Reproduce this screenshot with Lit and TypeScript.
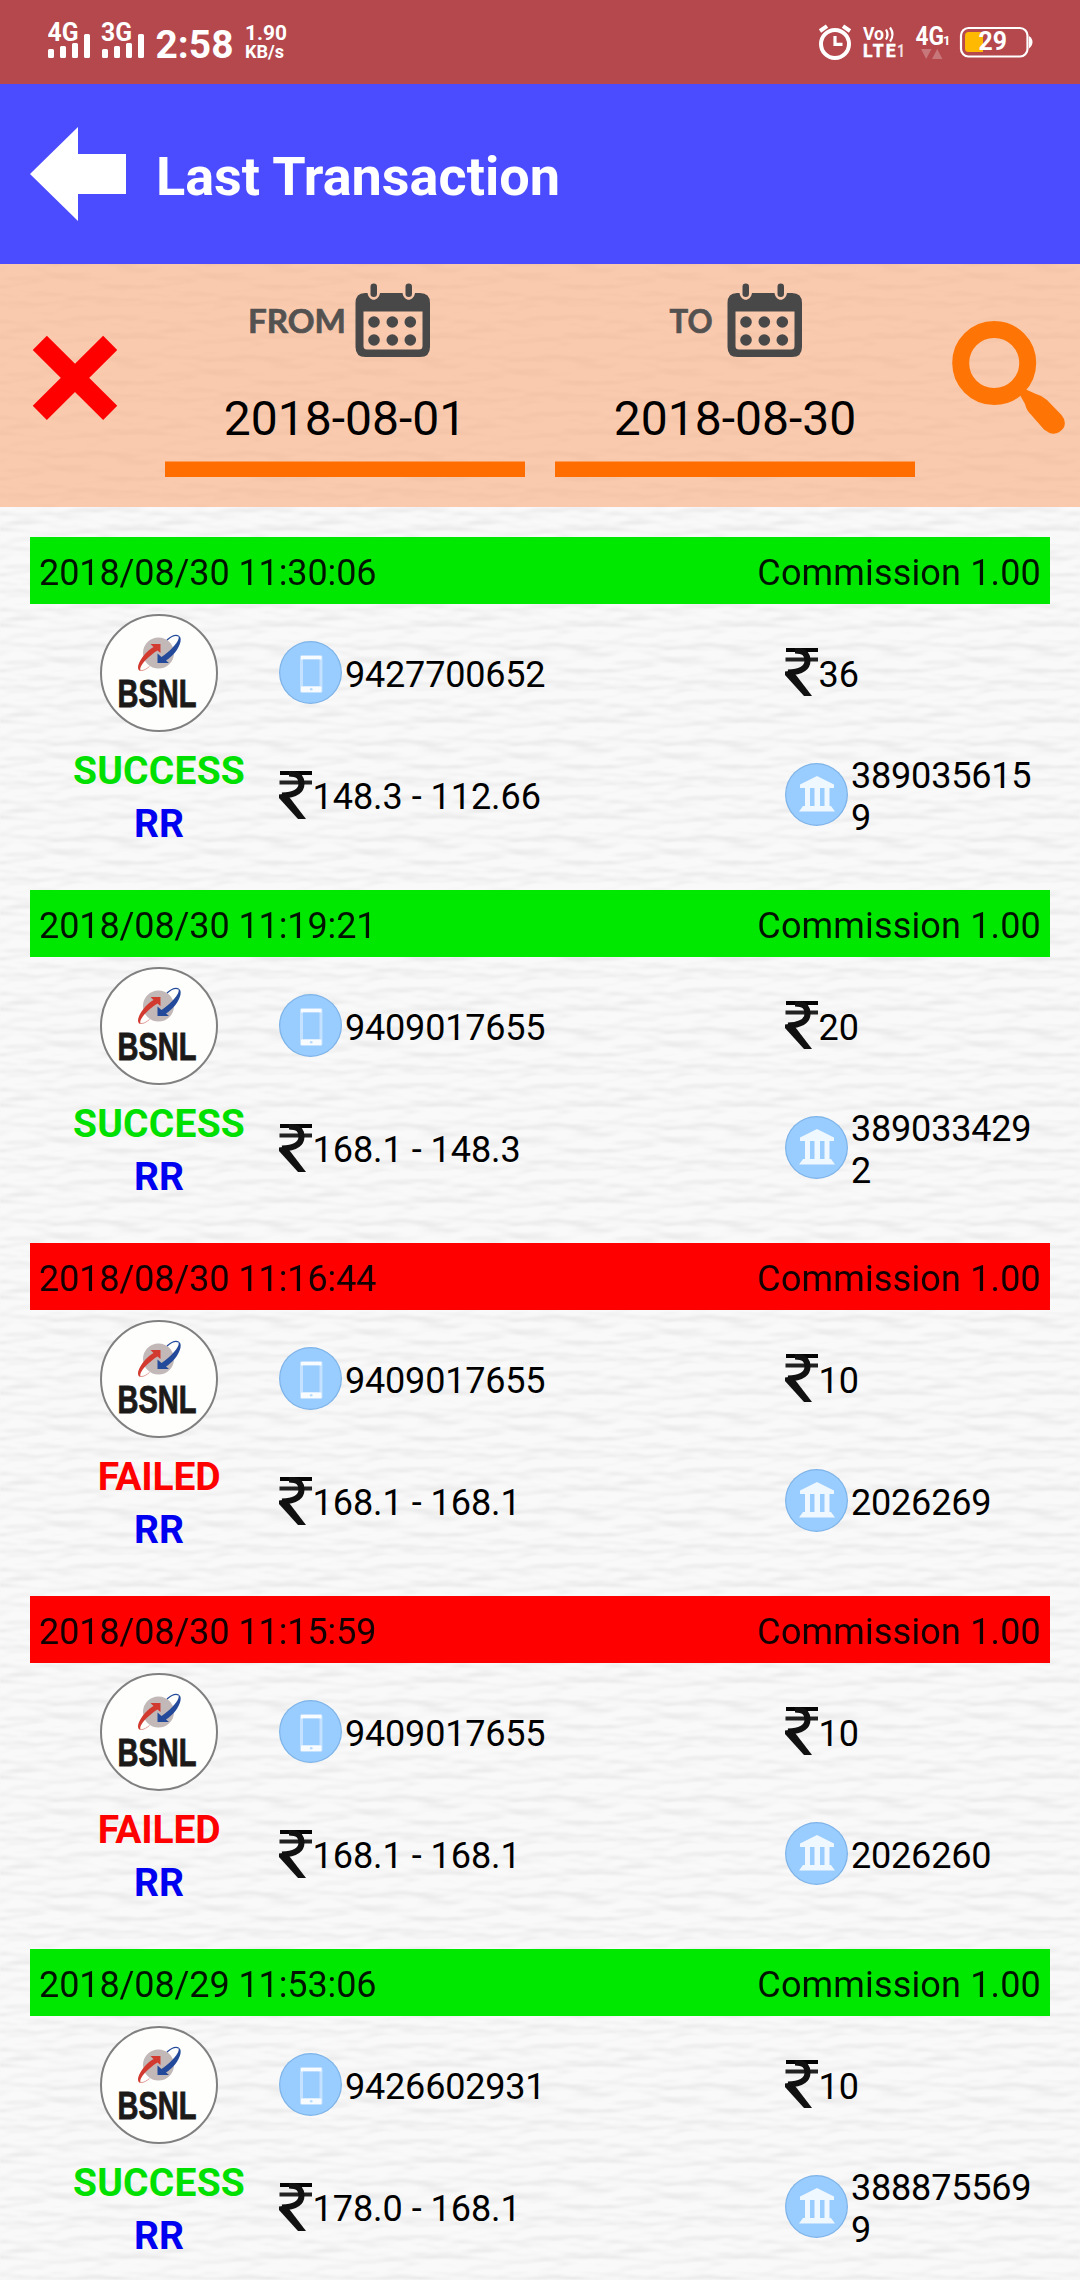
import { LitElement, html, svg, css } from "lit";
import { customElement, property } from "lit/decorators.js";

interface Txn {
  time: string;
  ok: boolean;
  phone: string;
  amount: string;
  balance: string;
  ref: string;
}

const TXNS: Txn[] = [
  { time: "2018/08/30 11:30:06", ok: true, phone: "9427700652", amount: "36", balance: "148.3 - 112.66", ref: "3890356159" },
  { time: "2018/08/30 11:19:21", ok: true, phone: "9409017655", amount: "20", balance: "168.1 - 148.3", ref: "3890334292" },
  { time: "2018/08/30 11:16:44", ok: false, phone: "9409017655", amount: "10", balance: "168.1 - 168.1", ref: "2026269" },
  { time: "2018/08/30 11:15:59", ok: false, phone: "9409017655", amount: "10", balance: "168.1 - 168.1", ref: "2026260" },
  { time: "2018/08/29 11:53:06", ok: true, phone: "9426602931", amount: "10", balance: "178.0 - 168.1", ref: "3888755699" },
];

const rupee = html`<svg class="rupee" width="33" height="48" viewBox="0 0 33 48">
  <path d="M1 2H33" fill="none" stroke="#050505" stroke-width="4" />
  <path d="M0.500 11.500H33" fill="none" stroke="#222" stroke-width="4" />
  <path d="M10 2.500C19 2.500 22.500 6 22.500 12.500C22.500 20.500 16 24 3 24.500" fill="none" stroke="#111" stroke-width="6" />
  <path d="M0 23.500L7.500 22.500L27 48H19L0 27Z" fill="#111" />
</svg>`;

const phone = html`<svg width="64" height="63" viewBox="0 0 64 63">
  <circle cx="31.500" cy="31.500" r="31.500" fill="#7db3e8" />
  <circle cx="31.500" cy="31.500" r="30.300" fill="#99ccff" />
  <rect x="21" y="14" width="22.500" height="38" rx="2" fill="#c4e1ff" />
  <path d="M22 15H42.500V18.500H22ZM22 45.500H42.500V51H22Z" fill="#f8fcff" />
  <rect x="24" y="18.500" width="16.500" height="26.500" fill="#99ccff" />
  <circle cx="32.200" cy="48.200" r="1.300" fill="#b5daff" />
</svg>`;

const bank = html`<svg width="64" height="63" viewBox="0 0 64 63">
  <circle cx="31.500" cy="31.500" r="31.500" fill="#7db3e8" />
  <circle cx="31.500" cy="31.500" r="30.300" fill="#99ccff" />
  <path d="M32 13L49 21.500V25H15V21.500ZM20 24.500h5v20h-5zM29.500 24.500h5.500v20h-5.500zM39.500 24.500h5v20h-5zM18 43H46L50 48.500H14Z" fill="#eff7ff" />
</svg>`;

const logo = html`<svg width="118" height="118" viewBox="0 0 118 118">
  <circle cx="59" cy="59" r="58" fill="#fefefd" stroke="#808080" stroke-width="2" />
  <circle cx="58.500" cy="39" r="15.500" fill="#c2b8b8" />
  <path d="M41 57C35.500 56.500 38 48 45 40C48 36.500 51 34.500 53.500 33L50.500 30H60.500V39L57.500 36.500C50 41 42 49 40.500 53.500C40 55 40.300 56.300 41 57Z" fill="#d23a30" />
  <path d="M77.500 21.500C83 22 81 31 75 38.500C72 42 69 44.500 66 46.500L69 49H57.500V39.500L61.500 43C69 38 77 30 78.500 25C79 23 78.500 22 77.500 21.500Z" fill="#234a9a" />
  <path d="M67 26C71 22.500 75.500 20.500 78.500 22" fill="none" stroke="#234a9a" stroke-width="1.300" />
  <path d="M41 56.500C43.500 57 47 54.500 49.500 52.500" fill="none" stroke="#d8857d" stroke-width="0.800" />
  <text class="brand" x="17.500" y="93" textLength="79" lengthAdjust="spacingAndGlyphs">BSNL</text>
</svg>`;

const calendar = svg`
  <path fill-rule="evenodd" fill="#484848" d="M115 10H117.500C119 19 128.500 19 130 10H152.500C154 19 163.500 19 165 10H170Q180 10 180 20V64Q180 74 170 74H115.500Q105.500 74 105.500 64V20Q105.500 10 115 10ZM113.500 28.500V63Q113.500 66.500 117 66.500H169Q172.500 66.500 172.500 63V28.500Z" />
  <rect x="120.500" y="0.500" width="6.500" height="13.500" rx="3.200" fill="#484848" />
  <rect x="155.500" y="0.500" width="6.500" height="13.500" rx="3.200" fill="#484848" />
  <g fill="#484848"><circle cx="124" cy="39" r="5.800" /><circle cx="142.300" cy="39" r="5.800" /><circle cx="160.300" cy="39" r="5.800" /><circle cx="124" cy="57" r="5.800" /><circle cx="142.300" cy="57" r="5.800" /><circle cx="160.300" cy="57" r="5.800" /></g>`;

@customElement("status-bar")
class StatusBar extends LitElement {
  static styles = css`
    :host { display: flex; justify-content: space-between; height: 84px; background: #b5484d; padding: 0 46px 0 48px; }
    text { font-family: Roboto, sans-serif; font-weight: 700; fill: #fff; }
    .n { font-size: 25px; }
    .clock { font-size: 39px; }
    .s { font-size: 21px; }
    .xs { font-size: 17.500px; }
    .xxs { font-size: 13px; }
  `;
  render() {
    const bars = svg`<path d="M0 50.500q0-1.500 1.500-1.500h3q1.500 0 1.500 1.500v6q0 1.500-1.500 1.500h-3q-1.500 0-1.500-1.500zM12 47.500q0-1.500 1.500-1.500h3q1.500 0 1.500 1.500v9q0 1.500-1.500 1.500h-3q-1.500 0-1.500-1.500zM24 44.500q0-1.500 1.500-1.500h3q1.500 0 1.500 1.500v12q0 1.500-1.500 1.500h-3q-1.500 0-1.500-1.500zM36 35.500q0-1.500 1.500-1.500h3q1.500 0 1.500 1.500v21q0 1.500-1.500 1.500h-3q-1.500 0-1.500-1.500z" fill="#fff" />`;
    return html`
      <svg width="250" height="84" viewBox="0 0 250 84">
        <text class="n" x="-0.500" y="41" textLength="31" lengthAdjust="spacingAndGlyphs">4G</text>
        ${bars}
        <text class="n" x="53" y="41" textLength="31" lengthAdjust="spacingAndGlyphs">3G</text>
        <g transform="translate(54 0)">${bars}</g>
        <text class="clock" x="107.500" y="57.500" textLength="78" lengthAdjust="spacingAndGlyphs">2:58</text>
        <text class="s" x="197" y="40" textLength="42" lengthAdjust="spacingAndGlyphs">1.90</text>
        <text class="xs" x="197" y="58" textLength="39" lengthAdjust="spacingAndGlyphs">KB/s</text>
      </svg>
      <svg width="216" height="84" viewBox="818 0 216 84">
        <circle cx="835" cy="44" r="14" fill="none" stroke="#fff" stroke-width="4" />
        <path d="M835 36V44.300H842.500" fill="none" stroke="#fff" stroke-width="3.200" />
        <path d="M820 31L827 26.200M850 31L843 26.200" stroke="#fff" stroke-width="4" />
        <text class="xs" x="863" y="40" textLength="21" lengthAdjust="spacingAndGlyphs">Vo</text>
        <path d="M886 29.500Q889 34.500 886 39.500M890 27.500Q895 34.500 890 41.500" fill="none" stroke="#fff" stroke-width="2.200" />
        <text class="xs" x="863" y="57" textLength="32.500" stroke="#fff" stroke-width="0.500">LTE</text>
        <text class="xs" x="897" y="57" textLength="8" lengthAdjust="spacingAndGlyphs" fill-opacity="0.850">1</text>
        <text class="n" x="915.500" y="45" textLength="28.500" lengthAdjust="spacingAndGlyphs">4G</text>
        <text class="xxs" x="943" y="45" textLength="7">1</text>
        <path d="M921 49H931.500L926.200 59ZM932 59H942.500L937.200 49Z" fill="#fff" fill-opacity="0.250" />
        <rect x="961" y="28" width="66.500" height="28.500" rx="7.500" fill="none" stroke="#fff" stroke-width="2.200" />
        <path d="M968.500 32H983V52H968.500Q965 52 965 48.500V35.500Q965 32 968.500 32Z" fill="#ffb900" />
        <path d="M1029 36Q1032.500 38.500 1032.500 42T1029 48.500Z" fill="#fff" />
        <text class="n" x="978.500" y="50.300" textLength="28.500" lengthAdjust="spacingAndGlyphs">29</text>
      </svg>`;
  }
}

@customElement("txn-card")
class TxnCard extends LitElement {
  @property({ attribute: false }) txn!: Txn;
  static styles = css`
    :host { display: block; height: 353px; font: 36px/42px Roboto, sans-serif; color: #000; }
    .bar { display: flex; justify-content: space-between; align-items: center; height: 67px; padding: 4px 9px 0; box-sizing: border-box; }
    .ok .bar { background: #00e800; }
    .bad .bar { background: #f00; }
    .bar span { opacity: 0.920; letter-spacing: -0.100px; }
    .bar .comm { letter-spacing: 0.160px; }
    .body { display: grid; grid-template-columns: 249px 506px 265px; grid-template-rows: 136px 109px; }
    .left { grid-row: 1 / 3; display: flex; flex-direction: column; align-items: center; padding: 10px 0 0 9px; font-weight: 700; font-size: 39px; line-height: 53px; }
    .left svg { margin-bottom: 13px; overflow: visible; }
    .ok .status { color: #00e000; letter-spacing: 0.200px; }
    .bad .status { color: #f00; letter-spacing: -0.200px; }
    .type { color: #0000f0; }
    .cell { display: flex; align-items: center; letter-spacing: -0.200px; }
    .cell svg { flex: none; }
    .cell span { padding: 5px 0 0 2px; word-break: break-all; }
    .cell .rupee + span { padding-left: 0.500px; letter-spacing: -0.030px; }
    .brand { font: 700 39px "Liberation Sans", sans-serif; fill: #1c1a18; stroke: #1c1a18; stroke-width: 0.900; }
  `;
  render() {
    const t = this.txn;
    return html`<div class=${t.ok ? "ok" : "bad"}>
      <div class="bar"><span>${t.time}</span><span class="comm">Commission 1.00</span></div>
      <div class="body">
        <div class="left">${logo}<div class="status">${t.ok ? "SUCCESS" : "FAILED"}</div><div class="type">RR</div></div>
        <div class="cell">${phone}<span>${t.phone}</span></div>
        <div class="cell">${rupee}<span>${t.amount}</span></div>
        <div class="cell">${rupee}<span>${t.balance}</span></div>
        <div class="cell">${bank}<span>${t.ref}</span></div>
      </div>
    </div>`;
  }
}

@customElement("app-root")
class AppRoot extends LitElement {
  static styles = css`
    :host { display: block; position: relative; width: 1080px; height: 2280px; overflow: hidden; background: #f7f7f7; font-family: Roboto, sans-serif; }
    .paper { position: absolute; inset: 0; z-index: 0; }
    .page { position: relative; z-index: 1; display: flex; flex-direction: column; }
    .header { display: flex; align-items: center; gap: 30px; height: 180px; padding: 0 30px; background: #4b4cff; box-sizing: border-box; }
    .title { margin: 0; padding-top: 5px; font-size: 54px; font-weight: 700; color: #fff; line-height: 64px; }
    .filters { display: flex; height: 243px; background: rgba(252, 166, 118, 0.560); padding: 0 15px 0 30px; box-sizing: border-box; }
    .clear { width: 135px; padding-top: 69px; box-sizing: border-box; }
    .date { width: 360px; margin-right: 30px; display: flex; flex-direction: column; }
    .pick { padding-top: 19px; height: 95px; box-sizing: border-box; }
    .label { font: 700 33px Lato, sans-serif; fill: #545250; stroke: #545250; stroke-width: 0.700; }
    .value { height: 102px; padding-top: 32px; box-sizing: border-box; text-align: center; font-size: 48px; line-height: 56px; color: #000; }
    .rule { height: 16px; background: linear-gradient(#ff9a55 0 1px, #ff6c00 1px); }
    .search { padding-top: 57px; margin-left: 7px; }
    .list { padding: 30px 30px 0; }
    svg { display: block; }
  `;
  render() {
    return html`
      <svg class="paper" width="1080" height="2280" aria-hidden="true">
        <filter id="grain" x="0" y="0" width="1080" height="2280" filterUnits="userSpaceOnUse" color-interpolation-filters="sRGB">
          <feTurbulence x="0" y="84" width="153" height="96" type="fractalNoise" baseFrequency="0.026 0.085" numOctaves="2" seed="8" stitchTiles="stitch" />
          <feTile />
          <feDiffuseLighting surfaceScale="1.600" diffuseConstant="1.060" lighting-color="#fff">
            <feDistantLight azimuth="255" elevation="66" />
          </feDiffuseLighting>
          <feGaussianBlur stdDeviation="1.200 0.700" />
          <feComponentTransfer>
            <feFuncR type="linear" slope="0.300" intercept="0.677" />
            <feFuncG type="linear" slope="0.300" intercept="0.677" />
            <feFuncB type="linear" slope="0.300" intercept="0.677" />
          </feComponentTransfer>
        </filter>
        <rect width="1080" height="2280" filter="url(#grain)" />
      </svg>
      <div class="page">
        <status-bar></status-bar>
        <div class="header">
          <svg width="96" height="94" viewBox="0 0 96 94"><path d="M0 47L48 0V27H96V67H48V94Z" fill="#fff" /></svg>
          <h1 class="title">Last Transaction</h1>
        </div>
        <div class="filters">
          <div class="clear"><svg width="90" height="90" viewBox="30 333 90 90"><path d="M39.800 342.800L110.200 412.800M110.200 342.800L39.800 412.800" stroke="#f00" stroke-width="20" /></svg></div>
          <div class="date">
            <div class="pick"><svg width="360" height="75" viewBox="-85 0 360 75"><text class="label" x="-2" y="50" textLength="98" lengthAdjust="spacingAndGlyphs">FROM</text>${calendar}</svg></div>
            <div class="value">2018-08-01</div>
            <div class="rule"></div>
          </div>
          <div class="date">
            <div class="pick"><svg width="360" height="75" viewBox="-67 0 360 75"><text class="label" x="47.500" y="50" textLength="43" lengthAdjust="spacingAndGlyphs">TO</text>${calendar}</svg></div>
            <div class="value">2018-08-30</div>
            <div class="rule"></div>
          </div>
          <div class="search"><svg width="113" height="114" viewBox="952 320 113 114">
            <circle cx="994.200" cy="362" r="33.500" fill="none" stroke="#ff7505" stroke-width="17" />
            <path d="M1020 394L1026 388.500L1036 393Q1042 394.500 1047 399L1061.500 414Q1067 420.500 1063.500 427Q1058 434.500 1049.500 432L1044 428.500L1029.500 412Q1026.500 409 1025 403Z" fill="#ff7505" />
          </svg></div>
        </div>
        <div class="list">${TXNS.map((t) => html`<txn-card .txn=${t}></txn-card>`)}</div>
      </div>`;
  }
}
